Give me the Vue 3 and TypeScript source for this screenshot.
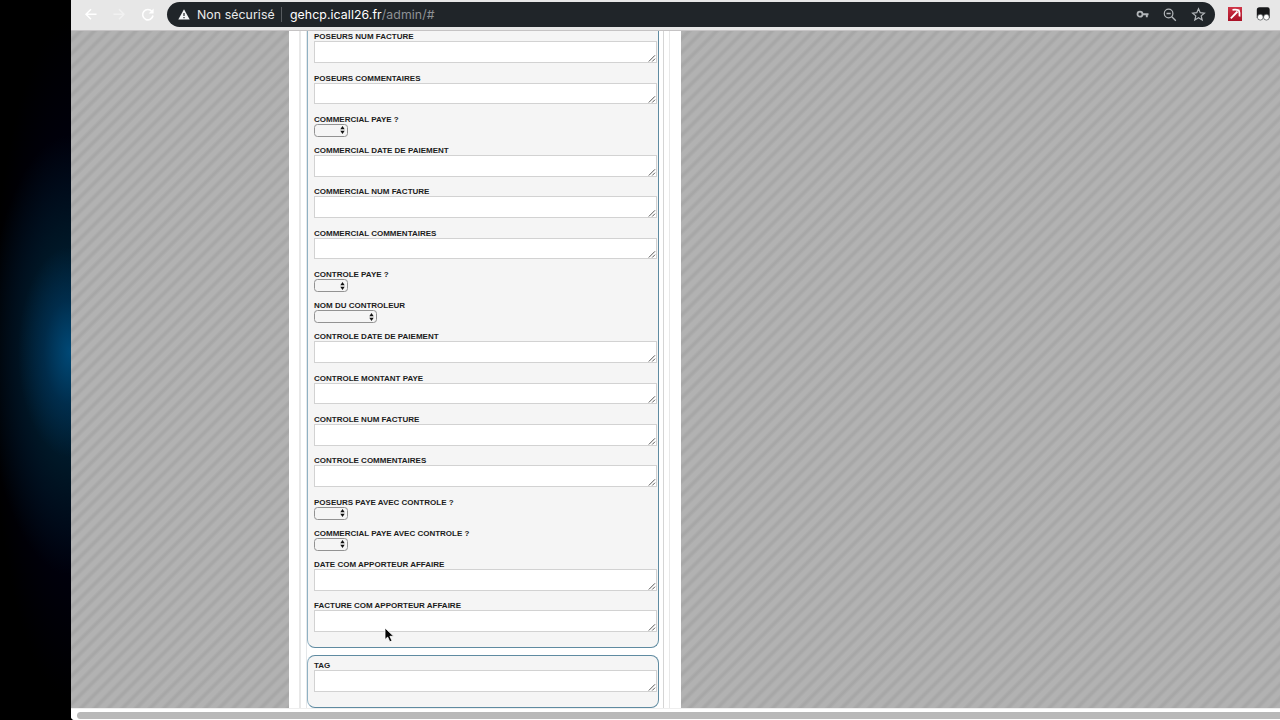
<script setup lang="ts">
interface Field {
  label: string
  kind: 'text' | 'select' | 'wide'
}

const fields: Field[] = [
  { label: 'POSEURS NUM FACTURE', kind: 'text' },
  { label: 'POSEURS COMMENTAIRES', kind: 'text' },
  { label: 'COMMERCIAL PAYE ?', kind: 'select' },
  { label: 'COMMERCIAL DATE DE PAIEMENT', kind: 'text' },
  { label: 'COMMERCIAL NUM FACTURE', kind: 'text' },
  { label: 'COMMERCIAL COMMENTAIRES', kind: 'text' },
  { label: 'CONTROLE PAYE ?', kind: 'select' },
  { label: 'NOM DU CONTROLEUR', kind: 'wide' },
  { label: 'CONTROLE DATE DE PAIEMENT', kind: 'text' },
  { label: 'CONTROLE MONTANT PAYE', kind: 'text' },
  { label: 'CONTROLE NUM FACTURE', kind: 'text' },
  { label: 'CONTROLE COMMENTAIRES', kind: 'text' },
  { label: 'POSEURS PAYE AVEC CONTROLE ?', kind: 'select' },
  { label: 'COMMERCIAL PAYE AVEC CONTROLE ?', kind: 'select' },
  { label: 'DATE COM APPORTEUR AFFAIRE', kind: 'text' },
  { label: 'FACTURE COM APPORTEUR AFFAIRE', kind: 'text' },
]

const groups: Field[][] = [fields, [{ label: 'TAG', kind: 'text' }]]
</script>

<template>
  <div class="desktop">
    <div class="wallpaper"></div>
    <div class="browser">
      <header class="toolbar">
        <svg class="nav" width="84" height="30" viewBox="0 0 84 30" fill="none">
          <path d="M25.500 14.200H15M20 9.200l-5 5 5 5" stroke="#fff" stroke-width="1.500" />
          <path d="M42.500 14.200H53M48 9.200l5 5-5 5" stroke="#f1f1f1" stroke-width="1.400" />
          <path d="M81 11.500A5.200 5.200 0 1 0 82 15.500" stroke="#fff" stroke-width="1.600" />
          <path d="M82.600 8.500v5h-5z" fill="#fff" />
        </svg>
        <div class="omnibox">
          <svg class="warn" width="12" height="11" viewBox="0 0 12 11">
            <path d="M6 0.200L11.700 10.600H0.300z" fill="#f4f5f6" />
            <path d="M6 4v3M6 8v1.300" stroke="#202529" stroke-width="1.200" />
          </svg>
          <span class="insecure">Non sécurisé</span>
          <span class="divider"></span>
          <span class="host">gehcp.icall26.fr</span><span class="path">/admin/#</span>
          <svg class="tools" width="74" height="18" viewBox="0 0 74 18" fill="none">
            <g stroke="#b3b7ba">
              <circle cx="5" cy="8.200" r="2.500" stroke-width="1.800" />
              <path d="M7.500 8.200H13.500M11.800 8.200v3" stroke-width="1.900" />
              <circle cx="33.600" cy="7.500" r="4.300" stroke-width="1.200" />
              <path d="M31.500 7.500h4.200M36.800 10.700l4 4" stroke-width="1.300" />
              <path d="M63.500 2.800l1.700 3.900 4.200.4-3.200 2.800 1 4.100-3.700-2.200-3.700 2.200 1-4.100-3.200-2.800 4.200-.4z" stroke-width="1.200" />
            </g>
          </svg>
        </div>
        <svg class="ext" width="42" height="16" viewBox="0 0 42 16">
          <defs>
            <linearGradient id="red" x1="0" y1="0" x2="0" y2="1">
              <stop offset="0" stop-color="#cf3547" />
              <stop offset="1" stop-color="#a91126" />
            </linearGradient>
          </defs>
          <rect x="0" y="1" width="14" height="14" fill="url(#red)" />
          <path d="M2.800 12.300L9.500 5.500M4.500 3.800Q8.500 3.300 10.800 4.300Q12 7 11.500 10.500" stroke="#fff" stroke-width="1.800" fill="none" />
          <path d="M31.500 1.200h8q2.200 0 2.200 2.200v8.600h-12.900V3.800q0-2.600 2.700-2.600z" fill="#17181a" />
          <circle cx="32.300" cy="11.200" r="2.900" fill="#fff" stroke="#44484a" stroke-width=".7" />
          <circle cx="38.400" cy="11.200" r="2.900" fill="#fff" stroke="#44484a" stroke-width=".7" />
        </svg>
      </header>

      <main class="viewport">
        <div class="sheet">
          <div class="frame">
            <section v-for="(group, g) in groups" :key="g" class="card" :class="{ first: g === 0 }">
              <div v-for="f in group" :key="f.label" class="field" :class="f.kind">
                <label class="label">{{ f.label }}</label>
                <div v-if="f.kind === 'text'" class="area">
                  <svg class="grip" width="8" height="8" viewBox="0 0 8 8">
                    <path d="M.8 7.500L7 1.300M4.200 7.500L7 4.700" stroke="#444" stroke-width=".9" />
                  </svg>
                </div>
                <div v-else class="select">
                  <svg width="5" height="8" viewBox="0 0 5 8">
                    <path d="M2.500 0L4.700 3.300H.3zM2.500 8L4.700 4.700H.3z" fill="#111" />
                  </svg>
                </div>
              </div>
            </section>
          </div>
        </div>
      </main>

      <footer class="scrollbar"><div class="thumb"></div></footer>
    </div>

    <svg class="cursor" width="12" height="17" viewBox="0 0 12 17">
      <path d="M1 1v11.500l2.700-2.400 2.100 4.700 2.200-1-2.100-4.500h3.800z" fill="#050505" stroke="#fff" stroke-width=".8" />
    </svg>
  </div>
</template>

<style>
html,
body {
  margin: 0;
  overflow: hidden;
}
</style>

<style scoped>
.desktop {
  position: relative;
  display: flex;
  width: 1280px;
  height: 720px;
  overflow: hidden;
  background: #000;
  font-family: "Liberation Sans", Arial, sans-serif;
}
.wallpaper {
  flex: 0 0 71px;
  background:
    radial-gradient(ellipse 52px 105px at 70px 352px, rgba(0, 84, 138, .72), rgba(0, 62, 110, .4) 50%, transparent),
    radial-gradient(ellipse 85px 220px at 71px 355px, #002b42, #001524 55%, transparent),
    radial-gradient(ellipse 80px 340px at 71px 360px, #00000f 50%, #000);
}
.browser {
  flex: 1;
  min-width: 0;
  display: flex;
  flex-direction: column;
  overflow: hidden;
  border-radius: 0 0 0 4px;
  background: #fff;
}
.toolbar {
  flex: 0 0 31px;
  box-sizing: border-box;
  display: flex;
  align-items: flex-start;
  background: #e7e7e7;
  border-bottom: 1px solid #c5c3c4;
}
.nav {
  flex: none;
  margin-right: 12px;
}
.omnibox {
  box-sizing: border-box;
  display: flex;
  align-items: center;
  width: 1048px;
  height: 25px;
  margin-top: 2px;
  padding-left: 11px;
  border-radius: 13px;
  background: #202529;
  font: 12.300px/24px Inter, Roboto, sans-serif;
  letter-spacing: .08px;
  color: #e9eaeb;
  white-space: nowrap;
}
.warn {
  flex: none;
  margin-right: 7px;
}
.insecure {
  width: 77px;
}
.divider {
  width: 1px;
  height: 15px;
  margin: 0 8px 0 7px;
  background: #575b5f;
}
.host {
  color: #fff;
}
.path {
  color: #8e9296;
}
.tools {
  margin-left: auto;
  margin-right: 6px;
}
.ext {
  margin: 6px 0 0 13px;
}
.viewport {
  flex: 0 0 678px;
  box-sizing: border-box;
  overflow: hidden;
  border-bottom: 1px solid #eee;
  background: repeating-linear-gradient(135deg, #b2b2b2 0, #b2b2b2 3.500px, #a7a7a7 6px, #a7a7a7 7.300px, #b2b2b2 9.780px);
}
.sheet {
  box-sizing: border-box;
  width: 392px;
  height: 678px;
  margin-left: 218px;
  padding: 0 11px 0 10px;
  background: #fff;
}
.frame {
  box-sizing: border-box;
  width: 371px;
  height: 678px;
  padding: 0 5px;
  border: solid #e8e8e8;
  border-width: 0 1px 0 2px;
  box-shadow: inset 6px 0 0 -1px #fff, inset 7px 0 0 -1px #e5e8ea, inset -5px 0 0 #fff, inset -6px 0 0 #d5d5d5;
}
.card {
  box-sizing: border-box;
  width: 352px;
  margin: 0 0 7px 1px;
  padding: 4.300px 1px 0 6px;
  height: 54px;
  border: 1px solid #5f8ba1;
  border-left-color: #8fb1c3;
  border-radius: 8px;
  background: #f5f5f5;
}
.card.first {
  height: 617px;
  padding-top: .3px;
  border-top: 0;
  border-radius: 0 0 8px 8px;
}
.card:last-child {
  height: 53px;
}
.field {
  height: 41.350px;
}
.field.select,
.field.wide {
  height: 31.150px;
}
.label {
  display: block;
  height: 10px;
  font-size: 8px;
  line-height: 11.400px;
  font-weight: 700;
  color: #1c1c1c;
  white-space: nowrap;
}
.area {
  box-sizing: border-box;
  display: flex;
  align-items: flex-end;
  justify-content: flex-end;
  width: 343px;
  height: 21.500px;
  border: 1px solid #d2d2d2;
  background: #fff;
}
.field > .select {
  box-sizing: border-box;
  display: flex;
  align-items: center;
  justify-content: flex-end;
  width: 34px;
  height: 13px;
  padding-right: 2.500px;
  border: 1px solid #929292;
  border-radius: 3.500px;
  background: #f5f5f5;
}
.field.wide > .select {
  width: 63px;
}
.scrollbar {
  flex: 1;
  padding: 3px 0 0 6px;
  background: #fff;
}
.thumb {
  height: 7px;
  border-radius: 4px 0 0 4px;
  background: #b9b9b9;
}
.cursor {
  position: absolute;
  left: 384px;
  top: 627px;
}
</style>
